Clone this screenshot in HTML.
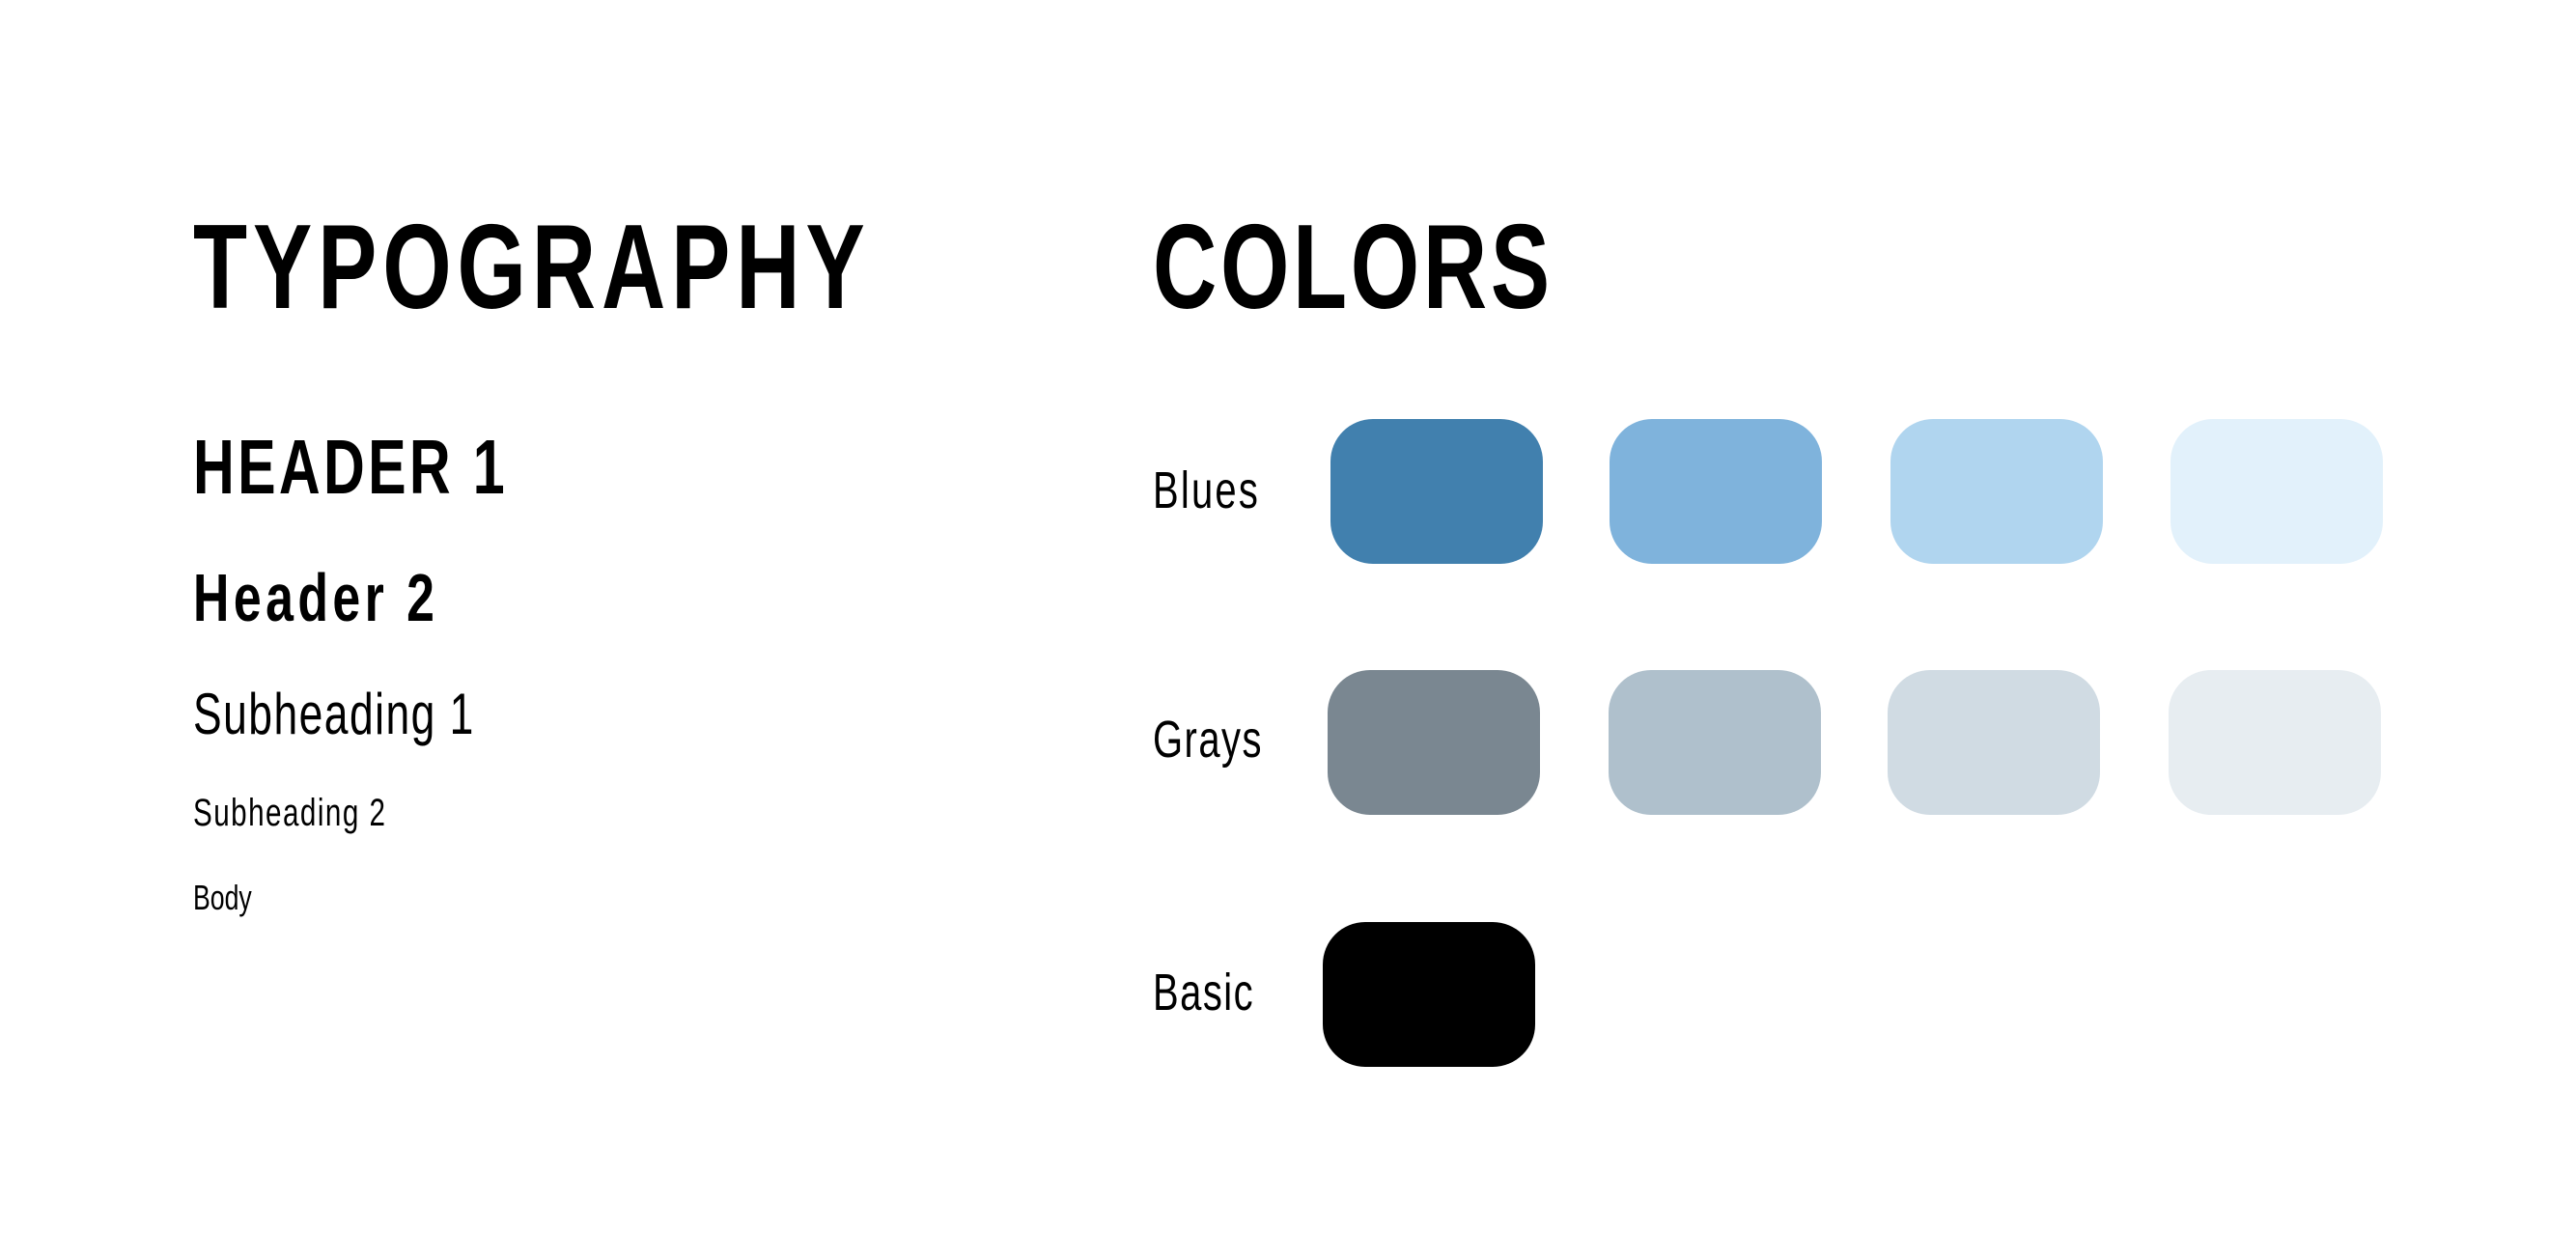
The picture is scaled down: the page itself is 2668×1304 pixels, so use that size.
<!DOCTYPE html>
<html><head><meta charset="utf-8"><style>
html,body{margin:0;padding:0;background:#fff;}
body{width:2668px;height:1304px;position:relative;overflow:hidden;font-family:"Liberation Sans",sans-serif;color:#000;}
.t{position:absolute;line-height:1;white-space:nowrap;transform-origin:0 0;transform:scaleX(0.74);}
.s{position:absolute;width:220px;height:150px;border-radius:44px;}
</style></head><body>
<div class="t" style="left:200px;top:215px;font-size:124px;font-weight:bold;letter-spacing:8px;">TYPOGRAPHY</div>
<div class="t" style="left:1194px;top:215px;font-size:124px;font-weight:bold;letter-spacing:5px;">COLORS</div>
<div class="t" style="left:200px;top:444px;font-size:80px;font-weight:bold;letter-spacing:4.5px;">HEADER 1</div>
<div class="t" style="left:200px;top:584px;font-size:70px;font-weight:bold;letter-spacing:6px;">Header 2</div>
<div class="t" style="left:200px;top:710px;font-size:60px;letter-spacing:2px;">Subheading 1</div>
<div class="t" style="left:200px;top:822px;font-size:40px;letter-spacing:2px;">Subheading 2</div>
<div class="t" style="left:200px;top:912px;font-size:36px;letter-spacing:0px;">Body</div>
<div class="t" style="left:1194px;top:481px;font-size:54px;letter-spacing:3px;">Blues</div>
<div class="t" style="left:1194px;top:739px;font-size:54px;letter-spacing:2px;">Grays</div>
<div class="t" style="left:1194px;top:1001px;font-size:54px;letter-spacing:2px;">Basic</div>
<div class="s" style="left:1378px;top:434px;background:#4180AE"></div>
<div class="s" style="left:1667px;top:434px;background:#7FB3DC"></div>
<div class="s" style="left:1958px;top:434px;background:#B0D5EF"></div>
<div class="s" style="left:2248px;top:434px;background:#E2F1FB"></div>
<div class="s" style="left:1375px;top:694px;background:#7A8791"></div>
<div class="s" style="left:1666px;top:694px;background:#AFC0CC"></div>
<div class="s" style="left:1955px;top:694px;background:#D0DBE3"></div>
<div class="s" style="left:2246px;top:694px;background:#E7EDF1"></div>
<div class="s" style="left:1370px;top:955px;background:#000"></div>
</body></html>
